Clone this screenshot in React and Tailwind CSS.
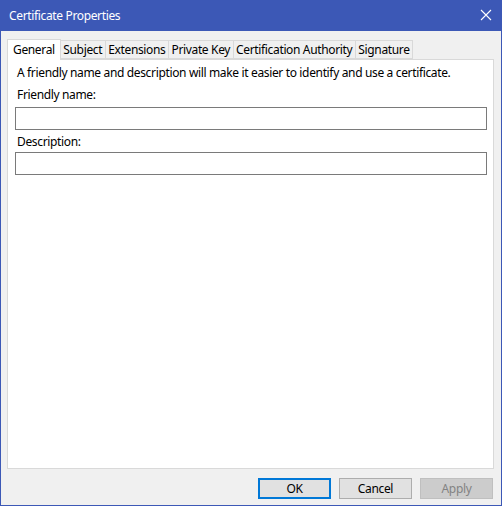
import React from 'react';

const tabs = ['General', 'Subject', 'Extensions', 'Private Key', 'Certification Authority', 'Signature'];

const font = { fontFamily: '"Segoe UI", "Noto Sans", sans-serif' };

const App = () => {
    return (
        <div className="w-[502px] h-[506px] flex flex-col bg-[#3c58b6] text-[12px] tracking-[-0.35px] text-black overflow-hidden" style={font}>
            {/* title bar */}
            <div className="h-[31px] shrink-0 flex items-center justify-between pl-[9px] text-white">
                <span className="leading-none">Certificate Properties</span>
                <svg width="30" height="31" viewBox="0 0 30 31" className="shrink-0 mr-[1px]">
                    <path d="M10 10 L20 20 M20 10 L10 20" stroke="#ffffff" strokeWidth="1.1" />
                </svg>
            </div>

            {/* body */}
            <div className="flex-1 mx-px mb-px bg-[#f0f0f0] flex flex-col pl-[6px] pr-[7px] pt-[7px]">
                {/* tab row */}
                <div className="flex items-end h-[21px]">
                    {tabs.map((t, i) => (
                        i === 0 ? (
                            <div key={t} className="relative z-10 h-[21px] -mb-px px-[5px] bg-white border border-b-0 border-[#d9d9d9] flex items-center leading-none">
                                {t}
                            </div>
                        ) : (
                            <div key={t} className="h-[19px] px-[2.5px] bg-[#f0f0f0] border border-l-0 border-[#d9d9d9] flex items-center leading-none">
                                {t}
                            </div>
                        )
                    ))}
                </div>

                {/* panel */}
                <div className="h-[410px] bg-white border border-[#d9d9d9] px-[7px] pt-[5px]">
                    <p className="leading-[16px] pl-[2px]">A friendly name and description will make it easier to identify and use a certificate.</p>
                    <p className="leading-[16px] pl-[2px] mt-[6px]">Friendly name:</p>
                    <div className="mt-[4px] h-[23px] border border-[#7a7a7a] bg-white mr-[-1px]" />
                    <p className="leading-[16px] pl-[2px] mt-[4px]">Description:</p>
                    <div className="mt-[2px] h-[23px] border border-[#7a7a7a] bg-white mr-[-1px]" />
                </div>

                {/* buttons */}
                <div className="flex justify-end gap-[8px] mt-[9px] pr-[1px]">
                    <button className="w-[73px] h-[21px] border-2 border-[#0078d7] bg-[#e1e1e1] leading-none">OK</button>
                    <button className="w-[73px] h-[21px] border border-[#adadad] bg-[#e1e1e1] leading-none">Cancel</button>
                    <button className="w-[73px] h-[21px] border border-[#bfbfbf] bg-[#cccccc] text-[#838383] leading-none">Apply</button>
                </div>
            </div>
        </div>
    );
};

export default App;
